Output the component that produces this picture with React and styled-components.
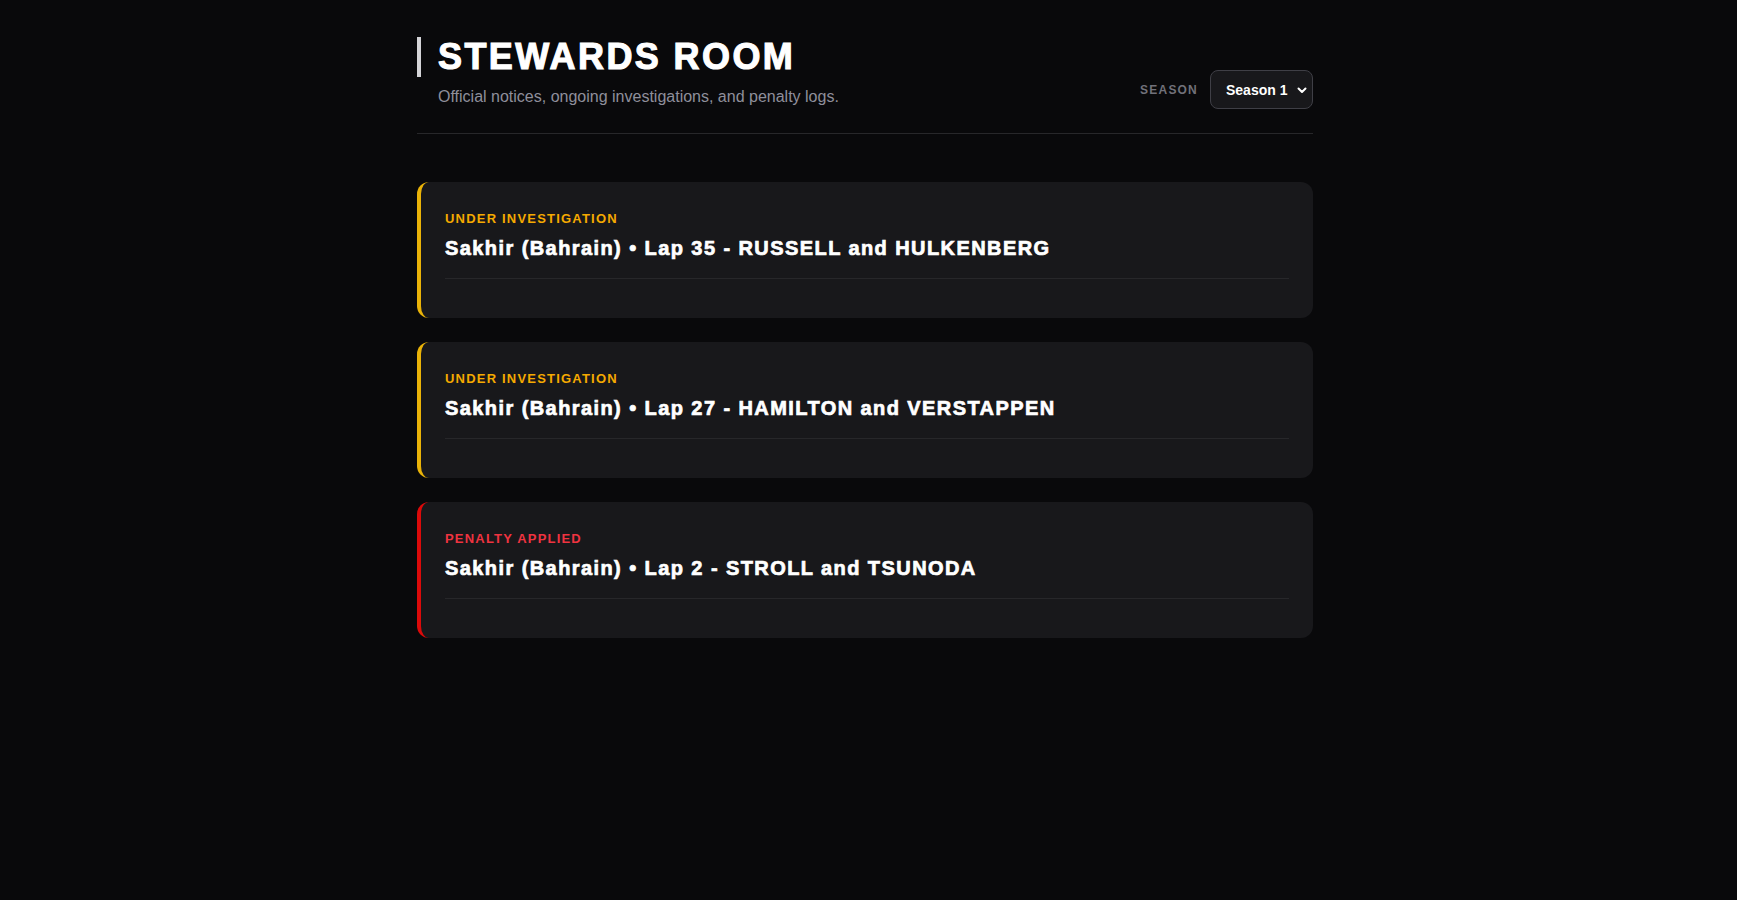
import React from "react";
import styled, { createGlobalStyle } from "styled-components";

const Global = createGlobalStyle`
  html, body { margin: 0; padding: 0; background: #09090b; }
  body { font-family: "Liberation Sans", Arial, sans-serif; color: #fff; color-scheme: dark; }
  * { box-sizing: border-box; }
`;

const Page = styled.div`
  min-height: 100vh;
  background: #09090b;
  padding: 37px 0 40px;
`;

const Container = styled.main`
  width: 896px;
  margin: 0 auto;
  position: relative;
  left: -3.5px;
`;

const Header = styled.header`
  display: flex;
  justify-content: space-between;
  align-items: flex-end;
  padding-bottom: 24px;
  border-bottom: 1px solid #27272a;
  margin-bottom: 48px;
`;

const TitleBlock = styled.div`
  display: flex;
  flex-direction: column;
`;

const Title = styled.h1`
  margin: 0;
  border-left: 4px solid #d4d4d8;
  padding-left: 17px;
  font-size: 36px;
  line-height: 40px;
  font-weight: 900;
  letter-spacing: 2.4px;
  -webkit-text-stroke: 1.1px #fff;
  color: #fff;
  text-transform: uppercase;
`;

const Subtitle = styled.p`
  margin: 8px 0 0 21px;
  font-size: 16px;
  line-height: 24px;
  color: #8f8f9b;
`;

const SeasonControl = styled.div`
  display: flex;
  align-items: center;
  gap: 12px;
`;

const SeasonLabel = styled.label`
  font-size: 12px;
  font-weight: 700;
  letter-spacing: 1.2px;
  color: #71717a;
  text-transform: uppercase;
`;

const SelectWrap = styled.div`
  position: relative;
  display: flex;
`;

const Select = styled.select`
  appearance: none;
  -webkit-appearance: none;
  height: 39px;
  width: 103px;
  padding: 0 18px 0 15px;
  background: #18181b;
  color: #fff;
  border: 1px solid #3f3f46;
  border-radius: 8px;
  font-family: "Liberation Sans", Arial, sans-serif;
  font-size: 14px;
  font-weight: 700;
  outline: none;
  cursor: pointer;
`;

const Chevron = styled.svg`
  position: absolute;
  right: 5px;
  top: 50%;
  width: 12px;
  height: 12px;
  transform: translateY(-50%);
  pointer-events: none;
`;

const List = styled.div`
  display: flex;
  flex-direction: column;
  gap: 24px;
`;

const Card = styled.article`
  background: #18181b;
  border-radius: 12px;
  border-left: 4px solid ${(p) => p.$accent};
  padding: 28px 24px 24px;
`;

const Status = styled.div`
  font-size: 13px;
  line-height: 18px;
  font-weight: 700;
  letter-spacing: 1.2px;
  text-transform: uppercase;
  color: ${(p) => p.$color};
`;

const CardTitle = styled.h2`
  margin: 8px 0 0;
  font-size: 20px;
  line-height: 24px;
  font-weight: 900;
  letter-spacing: 1.42px;
  -webkit-text-stroke: 0.7px #fff;
  color: #fff;
  padding-bottom: 18px;
  border-bottom: 1px solid #27272a;
`;

const CardBody = styled.div`
  margin-top: 15px;
`;

const incidents = [
  { status: "Under Investigation", tone: "yellow", title: "Sakhir (Bahrain) • Lap 35 - RUSSELL and HULKENBERG" },
  { status: "Under Investigation", tone: "yellow", title: "Sakhir (Bahrain) • Lap 27 - HAMILTON and VERSTAPPEN" },
  { status: "Penalty Applied", tone: "red", title: "Sakhir (Bahrain) • Lap 2 - STROLL and TSUNODA" },
];

const tones = {
  yellow: { accent: "#eab308", text: "#f5a900" },
  red: { accent: "#dc0a0a", text: "#ef3340" },
};

export default function App() {
  return (
    <Page>
      <Global />
      <Container>
        <Header>
          <TitleBlock>
            <Title>Stewards Room</Title>
            <Subtitle>Official notices, ongoing investigations, and penalty logs.</Subtitle>
          </TitleBlock>
          <SeasonControl>
            <SeasonLabel htmlFor="season">Season</SeasonLabel>
            <SelectWrap>
              <Select id="season" defaultValue="1">
                <option value="1">Season 1</option>
              </Select>
              <Chevron viewBox="0 0 12 12" fill="none" stroke="#fff" strokeWidth="2" strokeLinecap="round" strokeLinejoin="round">
                <path d="M2.5 4.5 6 8l3.5-3.5" />
              </Chevron>
            </SelectWrap>
          </SeasonControl>
        </Header>
        <List>
          {incidents.map((it, i) => (
            <Card key={i} $accent={tones[it.tone].accent}>
              <Status $color={tones[it.tone].text}>{it.status}</Status>
              <CardTitle>{it.title}</CardTitle>
              <CardBody />
            </Card>
          ))}
        </List>
      </Container>
    </Page>
  );
}
